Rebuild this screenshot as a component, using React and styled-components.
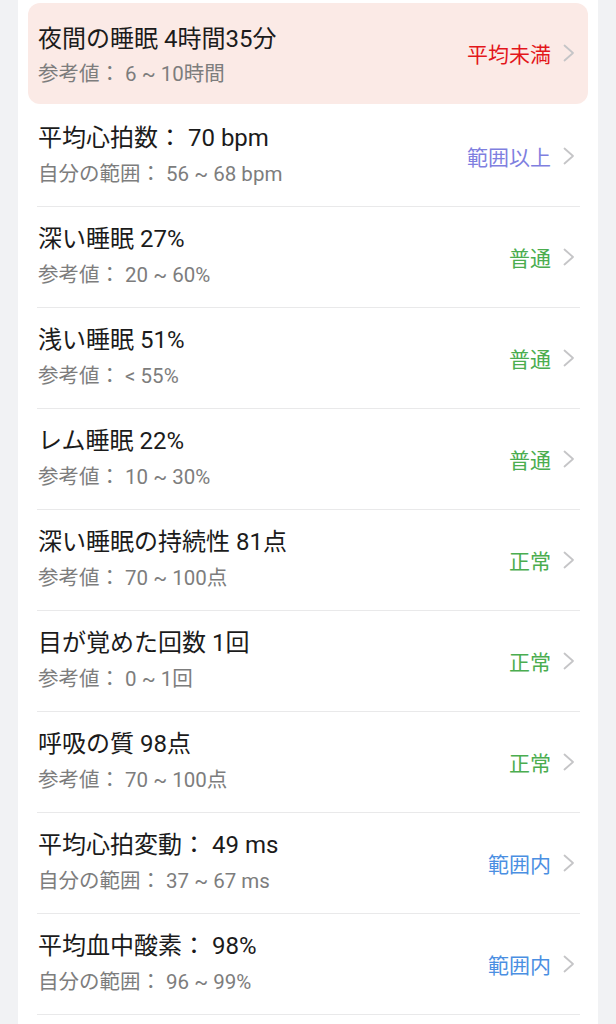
import React from "react";
import styled, { createGlobalStyle } from "styled-components";

const Global = createGlobalStyle`
  html, body { margin: 0; padding: 0; background: #f1f2f4; }
  body { font-family: Roboto, "Noto Sans CJK JP", "Noto Sans", sans-serif; }
`;

const Page = styled.div`
  padding: 0 18px;
  min-height: 1024px;
  box-sizing: border-box;
`;

const Card = styled.div`
  background: #ffffff;
  padding: 3px 10px 0;
  min-height: 1024px;
  box-sizing: border-box;
`;

const Row = styled.div`
  border-radius: 12px;
  background: ${(p) => (p.$highlight ? "#fbeae6" : "transparent")};
  margin-bottom: ${(p) => (p.$highlight ? "2px" : "0")};
  padding: 0 8px 0 9px;
`;

const Inner = styled.div`
  display: flex;
  align-items: center;
  height: 101px;
  box-sizing: border-box;
  padding: 0 5px 0 1px;
  border-bottom: 1px solid ${(p) => (p.$highlight ? "transparent" : "#e9e9ea")};
`;

const Texts = styled.div`
  flex: 1;
  align-self: stretch;
  display: flex;
  flex-direction: column;
  padding-top: ${(p) => (p.$highlight ? "20px" : "16px")};
  gap: ${(p) => (p.$highlight ? "5px" : "6px")};
`;

const Title = styled.div`
  font-size: 24px;
  line-height: 32px;
  color: #1b1b1b;
  white-space: nowrap;
`;

const Sub = styled.div`
  font-size: 20.5px;
  line-height: 28px;
  color: #7d7d7d;
  white-space: nowrap;
`;

const Status = styled.div`
  font-family: "Noto Sans CJK JP", sans-serif;
  font-size: 21px;
  line-height: 28px;
  color: ${(p) => p.$color};
  margin-right: 12px;
  white-space: nowrap;
`;

const Chevron = styled.svg`
  width: 12px;
  height: 18px;
  flex: none;
`;

const COLORS = {
  red: "#e3161b",
  purple: "#7f7fdf",
  green: "#4bad4f",
  blue: "#4b8fe2",
};

const items = [
  { t: "夜間の睡眠 4時間35分", s: "参考値： 6 ~ 10時間", st: "平均未満", c: "red", h: true },
  { t: "平均心拍数： 70 bpm", s: "自分の範囲： 56 ~ 68 bpm", st: "範囲以上", c: "purple" },
  { t: "深い睡眠 27%", s: "参考値： 20 ~ 60%", st: "普通", c: "green" },
  { t: "浅い睡眠 51%", s: "参考値： < 55%", st: "普通", c: "green" },
  { t: "レム睡眠 22%", s: "参考値： 10 ~ 30%", st: "普通", c: "green" },
  { t: "深い睡眠の持続性 81点", s: "参考値： 70 ~ 100点", st: "正常", c: "green" },
  { t: "目が覚めた回数 1回", s: "参考値： 0 ~ 1回", st: "正常", c: "green" },
  { t: "呼吸の質 98点", s: "参考値： 70 ~ 100点", st: "正常", c: "green" },
  { t: "平均心拍変動： 49 ms", s: "自分の範囲： 37 ~ 67 ms", st: "範囲内", c: "blue" },
  { t: "平均血中酸素： 98%", s: "自分の範囲： 96 ~ 99%", st: "範囲内", c: "blue" },
];

export default function App() {
  return (
    <Page>
      <Global />
      <Card>
        {items.map((it, i) => (
          <Row key={i} $highlight={it.h}>
            <Inner $highlight={it.h}>
              <Texts $highlight={it.h}>
                <Title>{it.t}</Title>
                <Sub>{it.s}</Sub>
              </Texts>
              <Status $color={COLORS[it.c]}>{it.st}</Status>
              <Chevron viewBox="0 0 12 18">
                <polyline
                  points="1.5,1.5 10,9 1.5,16.5"
                  fill="none"
                  stroke="#c5c5c7"
                  strokeWidth="1.8"
                  strokeLinecap="round"
                  strokeLinejoin="round"
                />
              </Chevron>
            </Inner>
          </Row>
        ))}
      </Card>
    </Page>
  );
}
